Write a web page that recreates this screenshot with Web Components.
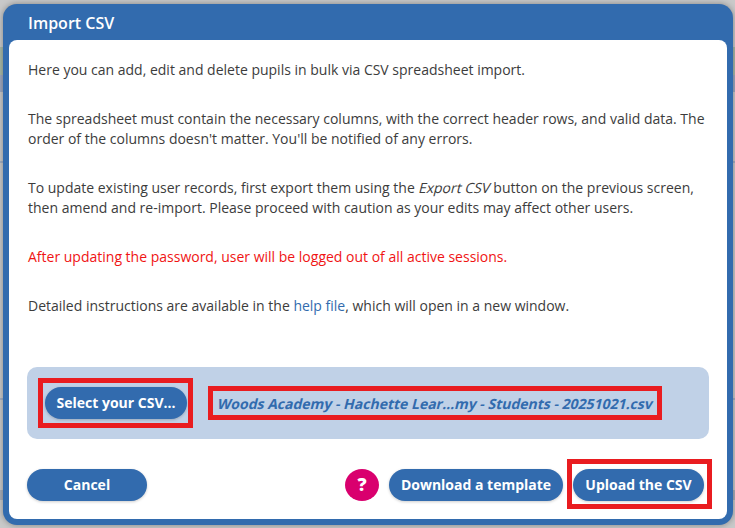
<!DOCTYPE html>
<html lang="en">
<head>
<meta charset="utf-8">
<title>Import CSV</title>
<style>
    html, body { margin: 0; height: 100%; }
    body { font-family: "Open Sans", "Noto Sans", sans-serif; font-size: 14px; color: #3c3c3c; }
</style>
</head>
<body>
<page-backdrop>
    <import-dialog heading="Import CSV">
        <p>Here you can add, edit and delete pupils in bulk via CSV spreadsheet import.</p>
        <p>The spreadsheet must contain the necessary columns, with the correct header rows, and valid data. The order of the columns doesn't matter. You'll be notified of any errors.</p>
        <p>To update existing user records, first export them using the <slant-text>Export CSV</slant-text> button on the previous screen, then amend and re-import. Please proceed with caution as your edits may affect other users.</p>
        <p class="warn">After updating the password, user will be logged out of all active sessions.</p>
        <p>Detailed instructions are available in the <a>help file</a>, which will open in a new window.</p>

        <file-picker slot="picker">
            <mark-box slot="button" style="--t:-9px;--r:-6px;--b:-9px;--l:-7px">
                <pill-button width="142">Select your CSV...</pill-button>
            </mark-box>
            <mark-box slot="file" style="--t:-8px;--r:-10px;--b:-7px;--l:-9px">
                <slant-text>Woods Academy - Hachette Lear...my - Students - 20251021.csv</slant-text>
            </mark-box>
        </file-picker>

        <pill-button slot="left" width="120">Cancel</pill-button>
        <help-button slot="right"></help-button>
        <pill-button slot="right" width="174">Download a template</pill-button>
        <mark-box slot="right" style="--t:-10px;--r:-8px;--b:-8px;--l:-6px">
            <pill-button width="131">Upload the CSV</pill-button>
        </mark-box>
    </import-dialog>
</page-backdrop>

<script>
    class PageBackdrop extends HTMLElement {
        constructor() {
            super();
            this.attachShadow({ mode: 'open' });
            this.shadowRoot.innerHTML = `
                <style>
                    :host {
                        display: block;
                        width: 735px;
                        height: 528px;
                        box-sizing: border-box;
                        padding: 4px 2px 3px 3px;
                        overflow: hidden;
                        background:
                            linear-gradient(#a9b9a8, #a9b9a8) 0 47px / 100% 28px no-repeat,
                            linear-gradient(#9fa9bf, #9fa9bf) 0 75px / 100% 17px no-repeat,
                            linear-gradient(#a4afc2, #a4afc2) 0 161px / 100% 2px no-repeat,
                            linear-gradient(#a4afc2, #a4afc2) 0 398px / 100% 2px no-repeat,
                            linear-gradient(#a9aeb8, #a9aeb8) 0 490px / 100% 10px no-repeat,
                            #c9c9c9;
                    }
                </style>
                <slot></slot>
            `;
        }
    }

    class ImportDialog extends HTMLElement {
        constructor() {
            super();
            this.attachShadow({ mode: 'open' });
            this.shadowRoot.innerHTML = `
                <style>
                    :host {
                        display: flex;
                        flex-direction: column;
                        height: 100%;
                        box-sizing: border-box;
                        background: #326bae;
                        border-radius: 14px;
                        padding: 0 6px 6px;
                        box-shadow: 0 0 6px rgba(0, 0, 0, 0.35);
                    }
                    .title {
                        height: 36px;
                        line-height: 39px;
                        padding-left: 19px;
                        font-size: 16px;
                        font-weight: 600;
                        color: #fff;
                        flex: none;
                    }
                    .body {
                        flex: 1;
                        display: flex;
                        flex-direction: column;
                        background: #fff;
                        border-radius: 8px;
                        padding: 0 18px 18px;
                    }
                    .copy {
                        flex: 1;
                        padding: 20px 1px 0;
                        line-height: 19.6px;
                    }
                    ::slotted(p) {
                        margin: 0 0 29.7px;
                    }
                    ::slotted(.warn) {
                        color: #f01414;
                    }
                    .footer {
                        display: flex;
                        justify-content: space-between;
                        margin-top: 30px;
                        padding-right: 5px;
                    }
                    .right {
                        display: flex;
                        gap: 10px;
                    }
                </style>
                <div class="title"></div>
                <div class="body">
                    <div class="copy"><slot></slot></div>
                    <slot name="picker"></slot>
                    <div class="footer">
                        <slot name="left"></slot>
                        <div class="right"><slot name="right"></slot></div>
                    </div>
                </div>
            `;
        }

        connectedCallback() {
            this.shadowRoot.querySelector('.title').textContent = this.getAttribute('heading');
            this.querySelectorAll('a').forEach(link => { link.style.color = '#326bae'; });
        }
    }

    // The italics in the reference keep the upright widths, so skew the upright face
    class SlantText extends HTMLElement {
        constructor() {
            super();
            this.attachShadow({ mode: 'open' });
            this.shadowRoot.innerHTML = `
                <style>
                    :host {
                        display: inline-block;
                        transform: skewX(-14deg);
                        transform-origin: 0 75%;
                    }
                </style>
                <slot></slot>
            `;
        }
    }

    class FilePicker extends HTMLElement {
        constructor() {
            super();
            this.attachShadow({ mode: 'open' });
            this.shadowRoot.innerHTML = `
                <style>
                    :host {
                        display: flex;
                        align-items: center;
                        gap: 30px;
                        height: 72px;
                        box-sizing: border-box;
                        padding: 0 0 0 18px;
                        background: #c0d1e7;
                        border-radius: 10px;
                    }
                    ::slotted([slot="file"]) {
                        color: #326bae;
                        font-weight: 700;
                    }
                </style>
                <slot name="button"></slot>
                <slot name="file"></slot>
            `;
        }
    }

    class MarkBox extends HTMLElement {
        constructor() {
            super();
            this.attachShadow({ mode: 'open' });
            this.shadowRoot.innerHTML = `
                <style>
                    :host {
                        display: block;
                        position: relative;
                    }
                    .frame {
                        position: absolute;
                        top: var(--t);
                        right: var(--r);
                        bottom: var(--b);
                        left: var(--l);
                        border: 5px solid #e91c20;
                        pointer-events: none;
                    }
                </style>
                <slot></slot>
                <div class="frame"></div>
            `;
        }
    }

    class PillButton extends HTMLElement {
        constructor() {
            super();
            this.attachShadow({ mode: 'open' });
            this.shadowRoot.innerHTML = `
                <style>
                    :host {
                        display: block;
                        height: 32px;
                        line-height: 32px;
                        text-align: center;
                        white-space: nowrap;
                        font-size: 14px;
                        font-weight: 700;
                        color: #fff;
                        background: #326bae;
                        border-radius: 16px;
                        box-shadow: 0 1px 3px rgba(0, 0, 0, 0.2);
                    }
                </style>
                <slot></slot>
            `;
        }

        connectedCallback() {
            this.style.width = this.getAttribute('width') + 'px';
        }
    }

    class HelpButton extends HTMLElement {
        constructor() {
            super();
            this.attachShadow({ mode: 'open' });
            this.shadowRoot.innerHTML = `
                <style>
                    :host {
                        display: block;
                        width: 34px;
                        height: 32px;
                        line-height: 31px;
                        text-align: center;
                        font-size: 18px;
                        font-weight: 800;
                        color: #fff;
                        background: #d9006e;
                        border-radius: 50%;
                    }
                </style>
                ?
            `;
        }
    }

    customElements.define('page-backdrop', PageBackdrop);
    customElements.define('import-dialog', ImportDialog);
    customElements.define('slant-text', SlantText);
    customElements.define('file-picker', FilePicker);
    customElements.define('mark-box', MarkBox);
    customElements.define('pill-button', PillButton);
    customElements.define('help-button', HelpButton);
</script>
</body>
</html>
